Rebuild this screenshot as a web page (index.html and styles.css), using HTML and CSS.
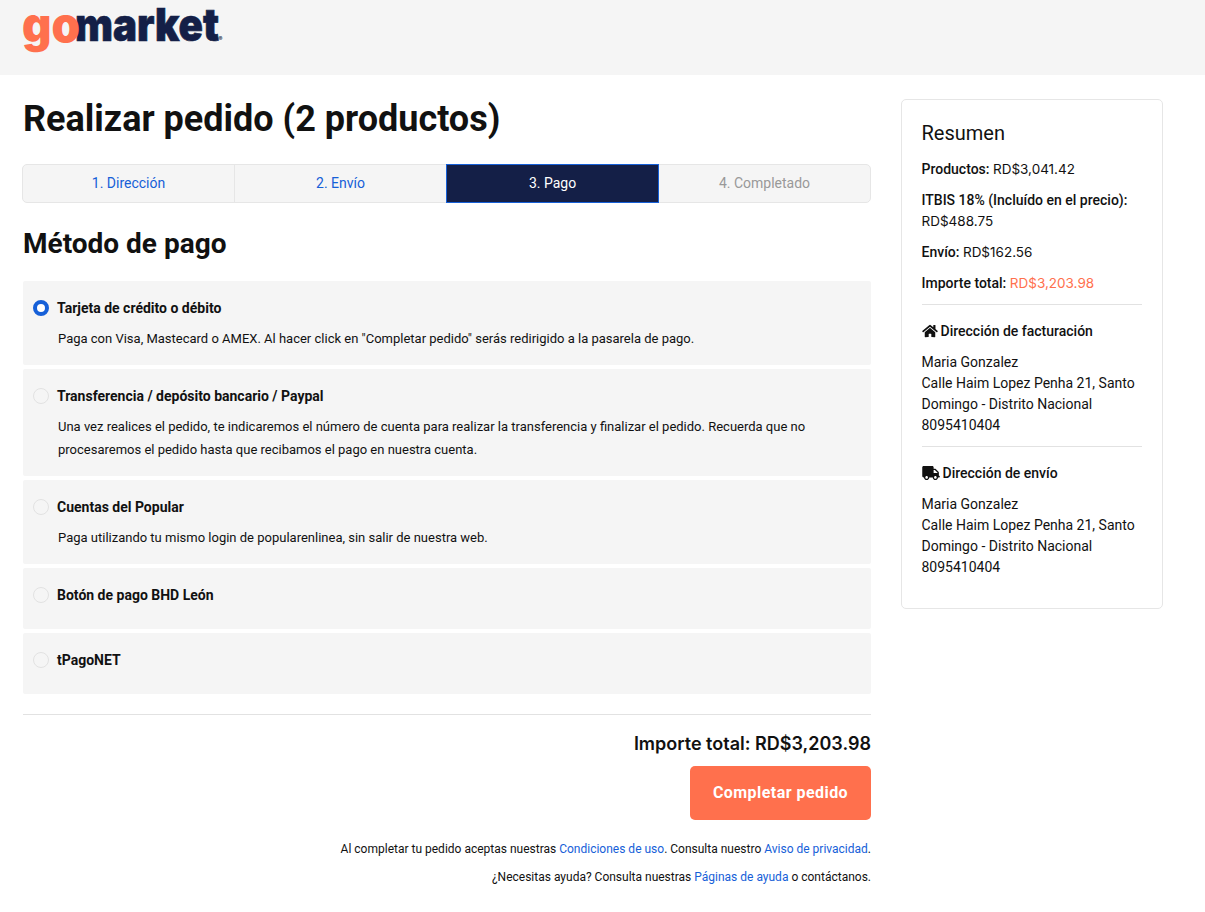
FILE: index.html
```
<!DOCTYPE html>
<html lang="es">
<head>
  <meta charset="UTF-8" />
  <meta name="viewport" content="width=device-width, initial-scale=1.0" />
  <title>Realizar pedido - gomarket</title>
  <link rel="stylesheet" href="styles.css">
</head>
<body>
  <header class="header">
    <svg class="logo" width="204" height="60" viewBox="0 0 204 60" role="img" aria-label="gomarket">
      <text class="logo-market" x="52" y="41" textLength="144" lengthAdjust="spacingAndGlyphs">market</text>
      <text class="logo-go" x="-1" y="42" textLength="58" lengthAdjust="spacingAndGlyphs">go</text>
      <text class="logo-mark" x="195.500" y="41">®</text>
    </svg>
  </header>

  <div class="container">
    <main class="main">
      <h1 class="page-title">Realizar pedido (2 productos)</h1>

      <nav class="steps">
        <a class="step" href="#">1. Dirección</a>
        <a class="step" href="#">2. Envío</a>
        <span class="step active">3. Pago</span>
        <span class="step disabled">4. Completado</span>
      </nav>

      <h2 class="section-title">Método de pago</h2>

      <div class="methods">
        <label class="method">
          <input type="radio" name="payment" checked />
          <span class="method-name">Tarjeta de crédito o débito</span>
          <span class="method-text">Paga con Visa, Mastecard o AMEX. Al hacer click en "Completar pedido" serás redirigido a la pasarela de pago.</span>
        </label>
        <label class="method">
          <input type="radio" name="payment" />
          <span class="method-name">Transferencia / depósito bancario / Paypal</span>
          <span class="method-text">Una vez realices el pedido, te indicaremos el número de cuenta para realizar la transferencia y finalizar el pedido. Recuerda que no<br>procesaremos el pedido hasta que recibamos el pago en nuestra cuenta.</span>
        </label>
        <label class="method">
          <input type="radio" name="payment" />
          <span class="method-name">Cuentas del Popular</span>
          <span class="method-text">Paga utilizando tu mismo login de popularenlinea, sin salir de nuestra web.</span>
        </label>
        <label class="method">
          <input type="radio" name="payment" />
          <span class="method-name">Botón de pago BHD León</span>
        </label>
        <label class="method">
          <input type="radio" name="payment" />
          <span class="method-name">tPagoNET</span>
        </label>
      </div>

      <div class="checkout">
        <div class="checkout-total">Importe total: RD$3,203.98</div>
        <button class="checkout-btn">Completar pedido</button>
        <p class="note">Al completar tu pedido aceptas nuestras <a href="#">Condiciones de uso</a>. Consulta nuestro <a href="#">Aviso de privacidad</a>.</p>
        <p class="note">¿Necesitas ayuda? Consulta nuestras <a href="#">Páginas de ayuda</a> o contáctanos.</p>
      </div>
    </main>

    <aside class="summary">
      <h3 class="summary-title">Resumen</h3>
      <p><strong>Productos:</strong> <span class="price">RD$3,041.42</span></p>
      <p><strong>ITBIS 18% (Incluído en el precio):</strong><br><span class="price">RD$488.75</span></p>
      <p><strong>Envío:</strong> <span class="price">RD$162.56</span></p>
      <p><strong>Importe total:</strong> <span class="price total">RD$3,203.98</span></p>

      <div class="address">
        <h4>
          <svg width="16" height="14" viewBox="0 0 576 512" fill="currentColor"><path d="M280.4 148.3L96 300.1V464a16 16 0 0 0 16 16l112-.3a16 16 0 0 0 16-16V368a16 16 0 0 1 16-16h64a16 16 0 0 1 16 16v95.600a16 16 0 0 0 16 16.100L464 480a16 16 0 0 0 16-16V300L295.700 148.300a12.200 12.200 0 0 0-15.300 0zM571.600 251.500L488 182.600V44a12 12 0 0 0-12-12h-56a12 12 0 0 0-12 12v72.600L318.500 43a48 48 0 0 0-61 0L4.300 251.500a12 12 0 0 0-1.600 16.900l25.500 31a12 12 0 0 0 16.900 1.600L280.400 107.200a12.200 12.200 0 0 1 15.300 0L531 301a12 12 0 0 0 16.900-1.600l25.500-31a12 12 0 0 0-1.800-16.900z"/></svg>
          Dirección de facturación
        </h4>
        <p>Maria Gonzalez<br>Calle Haim Lopez Penha 21, Santo<br>Domingo - Distrito Nacional<br>8095410404</p>
      </div>

      <div class="address">
        <h4>
          <svg width="18" height="14" viewBox="0 0 640 512" fill="currentColor"><path d="M624 352h-16V243.900c0-12.700-5.100-24.900-14.100-33.900L494 110.100c-9-9-21.200-14.100-33.900-14.100H416V48c0-26.500-21.500-48-48-48H48C21.500 0 0 21.500 0 48v320c0 26.500 21.500 48 48 48h16c0 53 43 96 96 96s96-43 96-96h128c0 53 43 96 96 96s96-43 96-96h48c8.800 0 16-7.200 16-16v-32c0-8.800-7.200-16-16-16zM160 464c-26.500 0-48-21.500-48-48s21.500-48 48-48 48 21.500 48 48-21.500 48-48 48zm320 0c-26.500 0-48-21.500-48-48s21.500-48 48-48 48 21.500 48 48-21.500 48-48 48zm80-208H416V144h44.100l99.900 99.900V256z"/></svg>
          Dirección de envío
        </h4>
        <p>Maria Gonzalez<br>Calle Haim Lopez Penha 21, Santo<br>Domingo - Distrito Nacional<br>8095410404</p>
      </div>
    </aside>
  </div>
</body>
</html>
```
FILE: styles.css
```
* {
  box-sizing: border-box;
}
body {
  margin: 0;
  font-family: Roboto, sans-serif;
  font-size: 14px;
  line-height: 21px;
  color: #111;
  background: #fff;
}
a {
  color: #1660d8;
  text-decoration: none;
}
h1, h2, h3, h4, p {
  margin: 0;
}
.header {
  height: 75px;
  padding-left: 23px;
  background: #f5f5f5;
}
.logo {
  display: block;
  overflow: visible;
  font-family: Inter, sans-serif;
  font-size: 45px;
  font-weight: 900;
}
.logo-go {
  font-size: 48px;
  fill: #ff704d;
}
.logo-market {
  fill: #141f47;
  stroke: #141f47;
  stroke-width: 0.7px;
}
.logo-mark {
  font-size: 6px;
  fill: #141f47;
}
.container {
  display: flex;
  align-items: flex-start;
  gap: 30px;
  padding: 24px 42px 0 23px;
}
.main {
  width: 848px;
}
.page-title {
  font-size: 36px;
  line-height: 40px;
  font-weight: 700;
}
.steps {
  display: flex;
  height: 39px;
  margin: 25px 0 0 -1px;
  border: 1px solid #e6e6e6;
  border-radius: 5px;
  background: #f5f5f5;
}
.step {
  flex: 1;
  line-height: 37px;
  text-align: center;
}
.step + .step {
  border-left: 1px solid #e6e6e6;
}
.step.active {
  margin: -1px 0;
  border: 1px solid #1660d8;
  color: #fff;
  background: #141f47;
}
.step.disabled {
  border-left: none;
  color: #999;
}
.section-title {
  margin: 24px 0 21px;
  font-size: 28px;
  line-height: 33px;
  font-weight: 700;
}
.methods {
  display: flex;
  flex-direction: column;
  gap: 4px;
}
.method {
  display: grid;
  grid-template-columns: 16px 1fr;
  column-gap: 8px;
  padding: 17px 10px 15px;
  min-height: 61px;
  align-content: start;
  border-radius: 2px;
  background: #f5f5f5;
}
.method input {
  appearance: none;
  width: 16px;
  height: 16px;
  margin: 2px 0 0;
  border: 1px solid #e2e2e2;
  border-radius: 50%;
}
.method input:checked {
  border: 4px solid #1660d8;
  background: #fff;
}
.method-name {
  font-weight: 700;
}
.method-text {
  grid-column: 2;
  margin-top: 8px;
  padding-left: 1px;
  font-size: 13px;
  line-height: 23px;
  white-space: nowrap;
}
.checkout {
  display: flex;
  flex-direction: column;
  align-items: flex-end;
  margin-top: 20px;
  padding-top: 17px;
  border-top: 1px solid #e2e2e2;
}
.checkout-total {
  font-family: Inter, sans-serif;
  font-size: 18px;
  line-height: 24px;
  font-weight: 600;
}
.checkout-btn {
  width: 181px;
  height: 54px;
  margin: 10px 0 19px;
  padding: 0 0 2px;
  border: none;
  border-radius: 5px;
  font-family: inherit;
  font-size: 16px;
  font-weight: 700;
  letter-spacing: 0.45px;
  color: #fff;
  background: #ff704d;
  cursor: pointer;
}
.note {
  margin-bottom: 7px;
  font-size: 12px;
}
.summary {
  width: 262px;
  height: 510px;
  padding: 20px 20px 20px 19.5px;
  border: 1px solid #e6e6e6;
  border-radius: 5px;
}
.summary-title {
  margin-bottom: 12px;
  font-size: 20px;
  line-height: 27px;
  font-weight: 400;
}
.summary p {
  margin-bottom: 10px;
}
.summary strong {
  font-weight: 500;
}
.price {
  font-family: Inter, sans-serif;
  font-size: 13.5px;
}
.price.total {
  color: #ff704d;
}
.address {
  padding-top: 16px;
  border-top: 1px solid #e2e2e2;
}
.address h4 {
  display: flex;
  align-items: center;
  gap: 3px;
  margin-bottom: 10px;
  font-weight: 500;
}
.address svg {
  margin-top: -2px;
}
```
